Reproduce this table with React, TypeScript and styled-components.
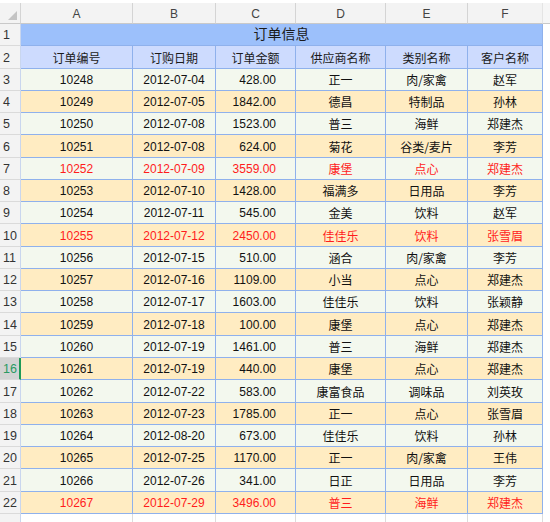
import React from "react";
import styled, { createGlobalStyle, css } from "styled-components";

const GlobalStyle = createGlobalStyle`
  html, body { margin: 0; padding: 0; background: #ffffff; }
  body { font-family: "Liberation Sans", Arial, "Noto Sans CJK SC", sans-serif; }
`;

type Row = [string, string, string, string, string, string];

const rows: Row[] = [
  ["10248", "2012-07-04", "428.00", "正一", "肉/家禽", "赵军"],
  ["10249", "2012-07-05", "1842.00", "德昌", "特制品", "孙林"],
  ["10250", "2012-07-08", "1523.00", "普三", "海鲜", "郑建杰"],
  ["10251", "2012-07-08", "624.00", "菊花", "谷类/麦片", "李芳"],
  ["10252", "2012-07-09", "3559.00", "康堡", "点心", "郑建杰"],
  ["10253", "2012-07-10", "1428.00", "福满多", "日用品", "李芳"],
  ["10254", "2012-07-11", "545.00", "金美", "饮料", "赵军"],
  ["10255", "2012-07-12", "2450.00", "佳佳乐", "饮料", "张雪眉"],
  ["10256", "2012-07-15", "510.00", "涵合", "肉/家禽", "李芳"],
  ["10257", "2012-07-16", "1109.00", "小当", "点心", "郑建杰"],
  ["10258", "2012-07-17", "1603.00", "佳佳乐", "饮料", "张颖静"],
  ["10259", "2012-07-18", "100.00", "康堡", "点心", "郑建杰"],
  ["10260", "2012-07-19", "1461.00", "普三", "海鲜", "郑建杰"],
  ["10261", "2012-07-19", "440.00", "康堡", "点心", "郑建杰"],
  ["10262", "2012-07-22", "583.00", "康富食品", "调味品", "刘英玫"],
  ["10263", "2012-07-23", "1785.00", "正一", "点心", "张雪眉"],
  ["10264", "2012-08-20", "673.00", "佳佳乐", "饮料", "孙林"],
  ["10265", "2012-07-25", "1170.00", "正一", "肉/家禽", "王伟"],
  ["10266", "2012-07-26", "341.00", "日正", "日用品", "李芳"],
  ["10267", "2012-07-29", "3496.00", "普三", "海鲜", "郑建杰"],
];

const headers = ["订单编号", "订购日期", "订单金额", "供应商名称", "类别名称", "客户名称"];
const letters = ["A", "B", "C", "D", "E", "F"];

const GRID = "#8fb1ec";

const Sheet = styled.div`
  display: grid;
  grid-template-columns: 21px 112px 83px 80px 90px 82px 75px 1fr;
  grid-template-rows: 21px repeat(23, 22.27px);
  padding-top: 3px;
  width: 550px;
  height: 522px;
  box-sizing: border-box;
  overflow: hidden;
`;

const Corner = styled.div`
  position: relative;
  background: #f3f3f3;
  border-right: 1px solid #d4d4d4;
  border-bottom: 1px solid #c9c9c9;
  box-sizing: border-box;
  &::after {
    content: "";
    position: absolute;
    right: 3px;
    bottom: 3px;
    width: 0;
    height: 0;
    border-left: 9px solid transparent;
    border-bottom: 9px solid #c4c4c4;
  }
`;

const ColHeader = styled.div<{ $last?: boolean }>`
  display: flex;
  align-items: center;
  justify-content: center;
  background: #f3f3f3;
  color: #444;
  font-size: 12px;
  border-right: 1px solid ${(p) => (p.$last ? "#e4e4e4" : "#d4d4d4")};
  border-bottom: 1px solid #c9c9c9;
  box-sizing: border-box;
  padding-top: 1px;
`;

const RowHeader = styled.div<{ $selected?: boolean }>`
  display: flex;
  align-items: flex-end;
  padding: 0 0 3px 3px;
  background: #f3f3f3;
  color: #333;
  font-size: 12.5px;
  border-bottom: 1px solid #dadada;
  border-right: 1px solid #c9d6ee;
  box-sizing: border-box;
  ${(p) =>
    p.$selected &&
    css`
      background: #d3d3d3;
      color: #2a9a62;
      border-right: 2px solid #1f9a57;
    `}
`;

const Title = styled.div`
  grid-column: span 6;
  display: flex;
  align-items: flex-end;
  justify-content: center;
  padding-bottom: 2px;
  background: #9cc0fb;
  color: #1a1a1a;
  font-family: "Noto Sans CJK SC", sans-serif;
  font-size: 14px;
  border-right: 1px solid ${GRID};
  border-bottom: 1px solid ${GRID};
  box-sizing: border-box;
`;

const HeadCell = styled.div`
  display: flex;
  align-items: flex-end;
  justify-content: center;
  padding-bottom: 2px;
  background: #cddbfe;
  color: #1a1a1a;
  font-family: "Noto Sans CJK SC", sans-serif;
  font-size: 12px;
  border-right: 1px solid ${GRID};
  border-bottom: 1px solid ${GRID};
  box-sizing: border-box;
`;

const Cell = styled.div<{ $tone: "green" | "orange" | "blank"; $red?: boolean; $right?: boolean; $cjk?: boolean }>`
  display: flex;
  align-items: flex-end;
  justify-content: ${(p) => (p.$right ? "flex-end" : "center")};
  padding: 0 ${(p) => (p.$right ? "19px" : "0")} 3px 0;
  background: ${(p) => (p.$tone === "green" ? "#f3f8ee" : p.$tone === "orange" ? "#ffecc2" : "#ffffff")};
  color: ${(p) => (p.$red ? "#ff1c1c" : "#111111")};
  font-family: ${(p) => (p.$cjk ? '"Noto Sans CJK SC", sans-serif' : '"Liberation Sans", Arial, sans-serif')};
  font-size: 12px;
  line-height: 14px;
  white-space: nowrap;
  border-right: 1px solid ${(p) => (p.$tone === "blank" ? "#dcdcdc" : GRID)};
  border-bottom: 1px solid ${(p) => (p.$tone === "blank" ? "#dcdcdc" : GRID)};
  box-sizing: border-box;
`;

const Filler = styled.div<{ $head?: boolean }>`
  background: ${(p) => (p.$head ? "#f6f6f6" : "#ffffff")};
  border-bottom: ${(p) => (p.$head ? "1px solid #c9c9c9" : "none")};
  box-sizing: border-box;
`;

export default function App() {
  return (
    <>
      <GlobalStyle />
      <Sheet>
        <Corner />
        {letters.map((l, i) => (
          <ColHeader key={l} $last={i === letters.length - 1}>
            {l}
          </ColHeader>
        ))}
        <Filler $head />

        <RowHeader>1</RowHeader>
        <Title>订单信息</Title>
        <Filler />

        <RowHeader>2</RowHeader>
        {headers.map((h) => (
          <HeadCell key={h}>{h}</HeadCell>
        ))}
        <Filler />

        {rows.map((r, i) => {
          const n = i + 3;
          const tone = n % 2 === 0 ? "orange" : "green";
          const red = parseFloat(r[2]) > 2000;
          return (
            <React.Fragment key={r[0]}>
              <RowHeader $selected={n === 16}>{n}</RowHeader>
              {r.map((v, j) => (
                <Cell key={j} $tone={tone} $red={red} $right={j === 2} $cjk={j >= 3}>
                  {v}
                </Cell>
              ))}
              <Filler />
            </React.Fragment>
          );
        })}

        <RowHeader />
        {letters.map((l) => (
          <Cell key={l} $tone="blank" />
        ))}
        <Filler />
      </Sheet>
    </>
  );
}
